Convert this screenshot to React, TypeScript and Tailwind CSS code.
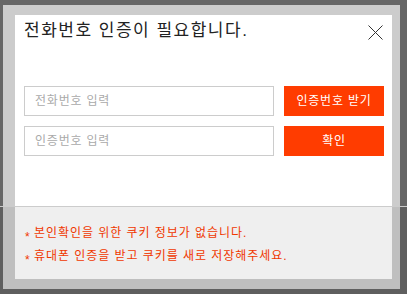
import React from 'react';

const font = { fontFamily: '"Liberation Sans", "Noto Sans CJK KR", sans-serif' };

const notices = ['본인확인을 위한 쿠키 정보가 없습니다.', '휴대폰 인증을 받고 쿠키를 새로 저장해주세요.'];

export default function App() {
  return (
    <div className="relative w-[407px] h-[294px] bg-[#666666] pt-[5px] pl-[3px] pr-[7px] pb-[5px] overflow-hidden" style={font}>
      <div className="h-full bg-[#cccccc] pt-[10px] pl-[12px] pr-[8px] pb-[10px]">
        <div className="h-full bg-white pl-[9px] pr-[8px] flex flex-col">
          {/* Header */}
          <div className="h-[71px] flex justify-between items-start">
            <h1 className="pt-[3px] text-[17px] leading-[25px] tracking-[1.5px] text-[#222222] font-normal">전화번호 인증이 필요합니다.</h1>
            <button className="mt-[10px] mr-[1px] w-[15px] h-[15px] text-[#333333]">
              <svg width="15" height="15" viewBox="0 0 15 15">
                <path d="M0.5 0.5 L14.5 14.5 M14.5 0.5 L0.5 14.5" stroke="currentColor" strokeWidth="1" fill="none" />
              </svg>
            </button>
          </div>

          {/* Form */}
          <div className="flex flex-col gap-[10px]">
            <div className="flex gap-[10px]">
              <input
                placeholder="전화번호 입력"
                className="w-[250px] h-[30px] border border-[#cccccc] px-[10px] text-[12px] tracking-[0.8px] text-[#333333] placeholder:text-[#aaaaaa] outline-none"
              />
              <button className="w-[100px] h-[30px] bg-[#ff3c00] text-white text-[12px] tracking-[0.8px]">인증번호 받기</button>
            </div>
            <div className="flex gap-[10px]">
              <input
                placeholder="인증번호 입력"
                className="w-[250px] h-[30px] border border-[#cccccc] px-[10px] text-[12px] tracking-[0.8px] text-[#333333] placeholder:text-[#aaaaaa] outline-none"
              />
              <button className="w-[100px] h-[30px] bg-[#ff3c00] text-white text-[12px] tracking-[0.8px]">확인</button>
            </div>
          </div>

          {/* Notices */}
          <div className="mt-[66px] flex flex-col">
            {notices.map((t) => (
              <p key={t} className="flex text-[12px] leading-[23px] text-[#ff3c00]">
                <span className="w-[10px] pl-[1px] translate-y-[4px]">*</span>
                <span className="tracking-[0.95px]">{t}</span>
              </p>
            ))}
          </div>
        </div>
      </div>

      {/* dim overlay over the lower part */}
      <div className="absolute left-0 right-0 bottom-0 top-[206px] bg-black/[0.063] border-t border-[#cccccc]" />
    </div>
  );
}
